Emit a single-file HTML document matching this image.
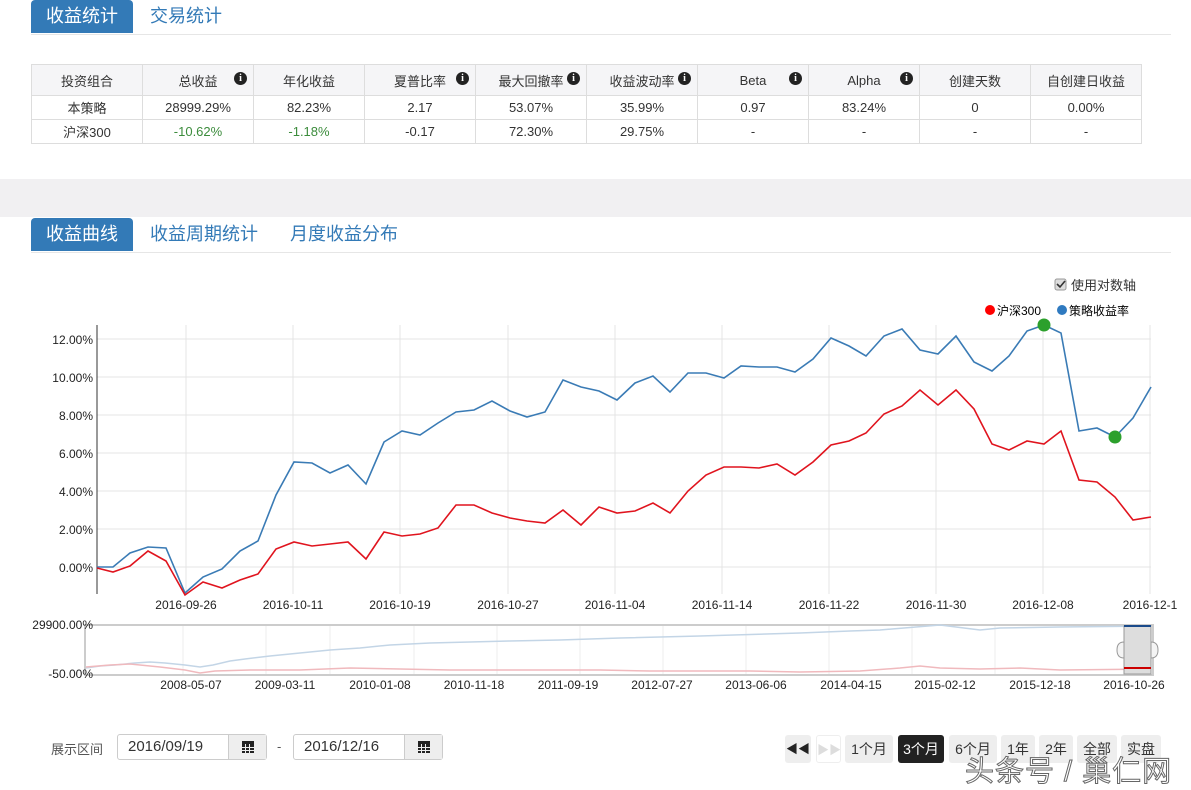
<!DOCTYPE html>
<html><head><meta charset="utf-8"><style>
*{margin:0;padding:0;box-sizing:border-box}
body{width:1191px;height:790px;background:#fff;position:relative;overflow:hidden;font-family:"Liberation Sans","Noto Sans CJK SC",sans-serif;color:#333}
.a{position:absolute}
.tab{position:absolute;height:33px;line-height:33px;font-size:18px;padding:0 15px}
.act{background:#337ab7;color:#fff;border-radius:4px 4px 0 0}
.lnk{color:#337ab7}
table{position:absolute;left:31px;top:64px;border-collapse:collapse;font-size:13px}
td{border:1px solid #ddd;width:111px;text-align:center;height:24px;position:relative}
tr.h td{background:#f5f5f7;height:31px}
.i{position:absolute;right:6px;top:7px;width:13px;height:13px;border-radius:50%;background:#222;color:#fff;font-size:10px;line-height:13px;font-weight:bold;font-family:"Liberation Serif",serif}
.g{color:#3c8c3c}
.btn{position:absolute;top:735px;height:28px;line-height:28px;font-size:14px;background:#eee;border-radius:3px;text-align:center;color:#333}
.cal{position:absolute;top:735px;width:38px;height:24px;background:#eee;border-left:1px solid #ccc}
.cal i{position:absolute;left:13px;top:6px;width:12px;height:12px;background:#222;border-top:3px solid #222;background-image:linear-gradient(90deg,transparent 3px,#eee 3px,#eee 4px,transparent 4px,transparent 7px,#eee 7px,#eee 8px,transparent 8px),linear-gradient(transparent 3px,#eee 3px,#eee 4px,transparent 4px,transparent 6px,#eee 6px,#eee 7px,transparent 7px)}
</style></head><body>
<div class="tab act" style="left:31px;top:0">收益统计</div>
<div class="tab lnk" style="left:135px;top:0">交易统计</div>
<div class="a" style="left:31px;top:34px;width:1140px;height:1px;background:#e6e6e6"></div>
<table>
<tr class="h"><td>投资组合</td><td>总收益<span class="i">i</span></td><td>年化收益</td><td>夏普比率<span class="i">i</span></td><td>最大回撤率<span class="i">i</span></td><td>收益波动率<span class="i">i</span></td><td>Beta<span class="i">i</span></td><td>Alpha<span class="i">i</span></td><td>创建天数</td><td>自创建日收益</td></tr>
<tr><td>本策略</td><td>28999.29%</td><td>82.23%</td><td>2.17</td><td>53.07%</td><td>35.99%</td><td>0.97</td><td>83.24%</td><td>0</td><td>0.00%</td></tr>
<tr><td>沪深300</td><td class="g">-10.62%</td><td class="g">-1.18%</td><td>-0.17</td><td>72.30%</td><td>29.75%</td><td>-</td><td>-</td><td>-</td><td>-</td></tr>
</table>
<div class="a" style="left:0;top:179px;width:1191px;height:38px;background:#f1f0f2"></div>
<div class="tab act" style="left:31px;top:218px">收益曲线</div>
<div class="tab lnk" style="left:135px;top:218px">收益周期统计</div>
<div class="tab lnk" style="left:275px;top:218px">月度收益分布</div>
<div class="a" style="left:31px;top:252px;width:1140px;height:1px;background:#e6e6e6"></div>
<svg class="a" style="left:0;top:270px" width="1191" height="430" viewBox="0 270 1191 430" font-family="Liberation Sans,Noto Sans CJK SC,sans-serif">
<rect x="1055" y="279" width="11" height="11" rx="2" fill="#ddd" stroke="#999"/><path d="M1057 284l3 3 5-6" stroke="#333" stroke-width="1.6" fill="none"/>
<text x="1071" y="290" font-size="13" fill="#333">使用对数轴</text>
<circle cx="990" cy="310" r="5" fill="#f00"/><text x="997" y="315" font-size="12">沪深300</text>
<circle cx="1062" cy="310" r="5" fill="#2f7ac0"/><text x="1069" y="315" font-size="12">策略收益率</text>
<g stroke="#e4e4e4" stroke-width="1">
<path d="M97 339H1151M97 377H1151M97 415H1151M97 453H1151M97 491H1151M97 529H1151M97 567H1151"/>
<path d="M186 325V594M293 325V594M400 325V594M508 325V594M615 325V594M722 325V594M829 325V594M936 325V594M1043 325V594M1150 325V594"/>
</g>
<path d="M97 325V594" stroke="#333"/>
<g font-size="12" fill="#222" text-anchor="end">
<text x="93" y="344">12.00%</text><text x="93" y="382">10.00%</text><text x="93" y="420">8.00%</text><text x="93" y="458">6.00%</text><text x="93" y="496">4.00%</text><text x="93" y="534">2.00%</text><text x="93" y="572">0.00%</text>
</g>
<g font-size="12" fill="#222" text-anchor="middle">
<text x="186" y="609">2016-09-26</text><text x="293" y="609">2016-10-11</text><text x="400" y="609">2016-10-19</text><text x="508" y="609">2016-10-27</text><text x="615" y="609">2016-11-04</text><text x="722" y="609">2016-11-14</text><text x="829" y="609">2016-11-22</text><text x="936" y="609">2016-11-30</text><text x="1043" y="609">2016-12-08</text><text x="1150" y="609">2016-12-1</text>
</g>
<polyline fill="none" stroke="#3a7bb5" stroke-width="1.6" points="97,567 113,567 130,553 148,547 166,548 185,593 203,577 222,569 240,551 258,541 276,495 294,462 312,463 330,473 348,465 366,484 384,442 402,431 420,435 438,423 456,412 474,410 492,401 510,411 527,417 545,412 563,380 581,387 599,391 617,400 635,383 653,376 670,392 688,373 706,373 724,378 741,366 759,367 777,367 795,372 813,359 831,338 849,346 866,356 884,336 902,329 920,350 938,354 956,336 974,362 992,371 1009,356 1027,331 1044,325 1061,333 1079,431 1097,428 1115,437 1133,418 1151,387"/>
<polyline fill="none" stroke="#e0141e" stroke-width="1.6" points="97,568 113,572 130,566 148,551 166,561 185,595 203,582 222,588 240,580 258,574 276,549 294,542 312,546 330,544 348,542 366,559 384,532 402,536 420,534 438,528 456,505 474,505 492,513 510,518 527,521 545,523 563,510 581,525 599,507 617,513 635,511 653,503 670,513 688,491 706,475 724,467 741,467 759,468 777,464 795,475 813,462 831,445 849,441 866,433 884,414 902,406 920,390 938,405 956,390 974,409 992,444 1009,450 1027,441 1044,444 1061,431 1079,480 1097,482 1115,497 1133,520 1151,517"/>
<circle cx="1044" cy="325" r="6.5" fill="#2ca02c"/><circle cx="1115" cy="437" r="6.5" fill="#2ca02c"/>
<rect x="85" y="625" width="1068" height="50" fill="#fff" stroke="#ccc" stroke-width="2"/>
<g stroke="#eee"><path d="M183 626V674M266 626V674M330 626V674M414 626V674M497 626V674M580 626V674M663 626V674M746 626V674M829 626V674M912 626V674M995 626V674"/></g>
<polyline fill="none" stroke="#c3d5e6" stroke-width="1.5" points="86,668 100,666 115,665 135,663 150,662 165,663 185,665 200,667 213,665 230,661 245,659 270,656 290,654 310,652 330,650 360,648 390,645 430,643 470,642 510,641 560,640 620,638 700,636 800,633 850,631 880,630 940,625 980,630 1000,628 1060,627 1150,626"/>
<polyline fill="none" stroke="#f0b9bd" stroke-width="1.5" points="86,667 110,665 130,664 160,667 185,670 200,673 215,671 250,670 300,670 350,668 400,669 450,670 500,670 550,670 600,670 650,671 700,671 750,671 800,672 860,671 900,668 920,666 940,668 980,669 1020,668 1060,670 1150,669"/>
<rect x="1124" y="626" width="27" height="48" fill="#ddd" stroke="#999"/>
<path d="M1124 626H1151" stroke="#1a4a8a" stroke-width="2"/><path d="M1124 668H1151" stroke="#c00" stroke-width="2"/>
<path d="M1124 642q-7 0-7 8t7 8z" fill="#f4f4f4" stroke="#999"/><path d="M1151 642q7 0 7 8t-7 8z" fill="#f4f4f4" stroke="#999"/>
<g font-size="12" fill="#222" text-anchor="end"><text x="93" y="629">29900.00%</text><text x="93" y="678">-50.00%</text></g>
<g font-size="12" fill="#222" text-anchor="middle">
<text x="191" y="689">2008-05-07</text><text x="285" y="689">2009-03-11</text><text x="380" y="689">2010-01-08</text><text x="474" y="689">2010-11-18</text><text x="568" y="689">2011-09-19</text><text x="662" y="689">2012-07-27</text><text x="756" y="689">2013-06-06</text><text x="851" y="689">2014-04-15</text><text x="945" y="689">2015-02-12</text><text x="1040" y="689">2015-12-18</text><text x="1134" y="689">2016-10-26</text>
</g>
</svg>
<div class="a" style="left:51px;top:739px;font-size:13px;color:#555">展示区间</div>
<div class="a" style="left:117px;top:734px;width:150px;height:26px;border:1px solid #ccc;border-radius:3px;font-size:15px;line-height:24px;padding-left:10px">2016/09/19</div>
<div class="cal" style="left:228px"><i></i></div>
<div class="a" style="left:277px;top:739px;font-size:13px;color:#555">-</div>
<div class="a" style="left:293px;top:734px;width:150px;height:26px;border:1px solid #ccc;border-radius:3px;font-size:15px;line-height:24px;padding-left:10px">2016/12/16</div>
<div class="cal" style="left:404px"><i></i></div>
<div class="btn" style="left:785px;width:26px;font-size:12px;color:#222">◀◀</div>
<div class="btn" style="left:816px;width:25px;background:#fff;border:1px solid #eee;color:#ddd;font-size:12px">▶▶</div>
<div class="btn" style="left:845px;width:48px">1个月</div>
<div class="btn" style="left:898px;width:46px;background:#222;color:#fff">3个月</div>
<div class="btn" style="left:949px;width:48px">6个月</div>
<div class="btn" style="left:1001px;width:34px">1年</div>
<div class="btn" style="left:1039px;width:34px">2年</div>
<div class="btn" style="left:1077px;width:40px">全部</div>
<div class="btn" style="left:1121px;width:40px">实盘</div>
<div class="a" style="left:965px;top:748px;font-size:29px;color:#fff;-webkit-text-stroke:1px #666;letter-spacing:1px">头条号 / 巢仁网</div>
</body></html>
